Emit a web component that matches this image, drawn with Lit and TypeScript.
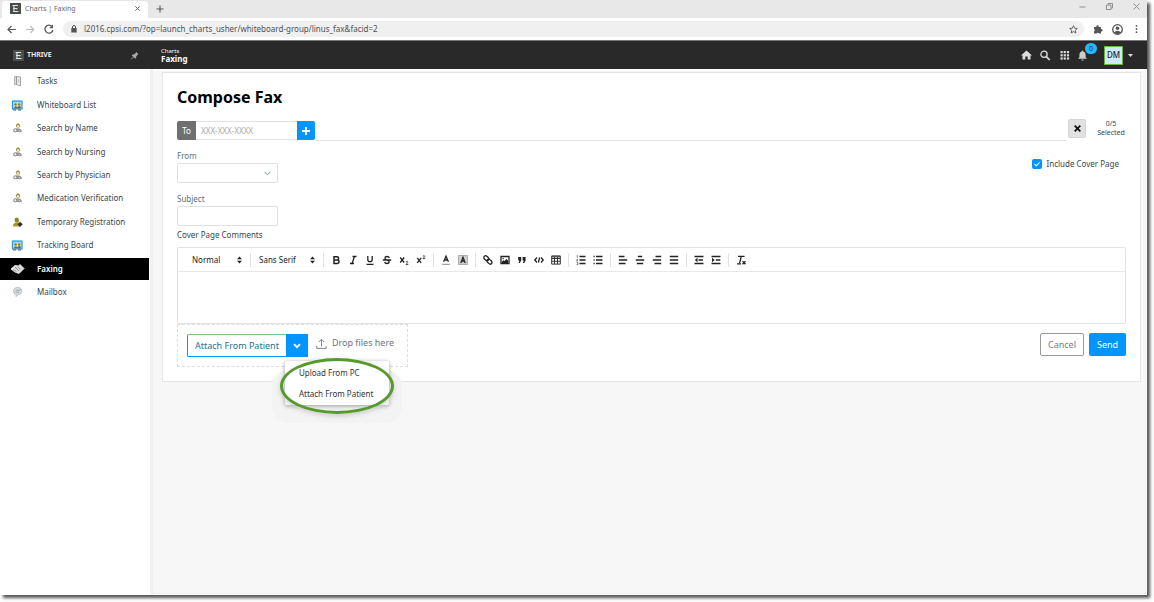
import { LitElement, html, svg, css } from "lit";
import { customElement, state } from "lit/decorators.js";

const NAV = [
  ["tasks", "Tasks"], ["board", "Whiteboard List"], ["search", "Search by Name"],
  ["search", "Search by Nursing"], ["search", "Search by Physician"],
  ["search", "Medication Verification"], ["person", "Temporary Registration"],
  ["board", "Tracking Board"], ["fax", "Faxing"], ["mail", "Mailbox"],
];

const NAV_ICONS: Record<string, unknown> = {
  tasks: svg`<path d="M2.500 1.500h2v8h-2z" fill="#ddd" stroke="#999" stroke-width=".7"/><path d="M4.500 1.500l4 .7v8.500l-4-1z" fill="#f0f0f0" stroke="#888" stroke-width=".8"/><path d="M6.500 4v4" stroke="#aaa" stroke-width=".7"/>`,
  board: svg`<path d="M.5 2h9.500v8H.5z" fill="#cfe3d0" stroke="#2196e8" stroke-width="1.200"/><path d="M.5 2.500h9.500" stroke="#45b1f5" stroke-width="1.500"/><circle cx="3.500" cy="5.500" r="1.300" fill="#8a8020"/><circle cx="7.200" cy="5.500" r="1.300" fill="#8a8020"/><path d="M1.500 9.500q2-4 4-1q2-4 4 1z" fill="#5d6a70"/><path d="M1 11h3M6 11h3" stroke="#333" stroke-width=".8"/>`,
  search: svg`<path d="M4 4q0-2.700 2-2.700T8 4L7.300 5.500H4.800z" fill="#9a8b2d"/><circle cx="6" cy="4.200" r="1.100" fill="#eee9cc"/><path d="M1.500 10q.5-3.700 4-3.700 4 0 4.500 3.700z" fill="#9a9e9f"/><circle cx="3.300" cy="8.300" r="1.600" fill="#e4eaec" stroke="#777" stroke-width=".8"/><circle cx="7.300" cy="8.800" r="1.100" fill="#e4eaec" stroke="#777" stroke-width=".7"/>`,
  person: svg`<path d="M2.500 4q0-2.500 2.200-2.500T7 4L6.500 6.500h-3z" fill="#91851f"/><path d="M1 10.500q0-4 3.700-4t4 4z" fill="#a19726"/><path d="M8 5.800L10.800 8.300 8 11 5.500 8.300z" fill="#333"/>`,
  fax: svg`<path d="M-1 6l4-3.500 3.500.5 1.500-1.500L12 5.500l-5 5-4-1.500z" fill="#dcdcdc" stroke="#fff" stroke-width=".8"/><path d="M3 4l4 4M5.500 3.500l3 3M1.500 6.500l3 2.300" stroke="#888" stroke-width=".9"/>`,
  mail: svg`<path d="M1.500 5q0-3.500 4.200-3.500T9.800 5 6 8.800l-2 2V8.500Q1.500 8 1.500 5z" fill="#d5dcdd" stroke="#a9b3b6" stroke-width=".7"/><path d="M3.500 6l1.500-2 2 1 1.500-2M4.500 7l2.500-.8" stroke="#8ba79a" stroke-width=".8" fill="none"/>`,
};

const S = (d: string) => svg`<path d=${d} fill="none" stroke="#222" stroke-width="1.300"/>`;
const F = (d: string) => svg`<path d=${d} fill="#222"/>`;

const TOOLS: [string, unknown][][] = [
  [
    ["Bold", svg`<path d="M3 1.700h3a1.600 1.600 0 0 1 0 3.300H3zM3 5h3.400a1.700 1.700 0 0 1 0 3.400H3z" fill="none" stroke="#222" stroke-width="1.500"/>`],
    ["Italic", S("M4.500 1.500h4M2 8.500h4M6.400 1.500L4.100 8.500")],
    ["Underline", S("M2.800 1v3.500a2.200 2.200 0 0 0 4.400 0V1M1.500 9.300h7")],
    ["Strike", S("M7.300 3Q7 1.500 5 1.500T2.900 3.200Q3 4.500 5 5T7.200 6.900Q7 8.500 5 8.500T2.700 7M.8 5h8.400")],
    ["Subscript", svg`${S("M1.200 2.500l4 5M5.200 2.500l-4 5")}<path d="M6.800 7q2-1.200 2 .3L7 9.500h2.300" fill="none" stroke="#222" stroke-width=".8"/>`],
    ["Superscript", svg`${S("M1.200 2.800l4 5M5.200 2.800l-4 5")}<path d="M6.800 1.200q2-1.200 2 .3L7 3.600h2.300" fill="none" stroke="#222" stroke-width=".8"/>`],
  ],
  [
    ["Text colour", svg`${S("M2.600 6.800L5 1.200l2.400 5.600M3.500 5h3")}<path d="M1.200 9.300h7.600" stroke="#888"/>`],
    ["Highlight", svg`<path d="M.5.500h9v9h-9z" fill="#d0d0d0" stroke="#777" stroke-dasharray="1 1"/>${S("M2.800 8L5 2.300 7.200 8M3.600 6h2.800")}`],
  ],
  [
    ["Link", svg`<g transform="rotate(42 5 5)" fill="none" stroke="#222" stroke-width="1.300"><rect x="-.2" y="3" width="5.600" height="3.600" rx="1.800"/><rect x="4.400" y="3.400" width="5.600" height="3.600" rx="1.800"/></g>`],
    ["Image", svg`${S("M1 1.500h8v7H1z")}${F("M2 8V6.500l1.500-1.300 1 .8L6.500 4 8 5.500V8zM2.500 3h1.200v1.200H2.500z")}`],
    ["Quote", F("M1.200 2h3v3.500L2.800 8H1.500l.9-2.500H1.200zM5.600 2h3v3.500L7.200 8H5.900l.9-2.500H5.600z")],
    ["Code", S("M3 2.500L.8 5 3 7.500M7 2.500L9.200 5 7 7.500M5.600 2.500L4.400 7.500")],
    ["Table", svg`<path d="M.7.900h8.600v8.200H.7zM.7 3.500h8.600M.7 6.300h8.600M3.500 2v7M6.500 2v7M.7 1.800h8.600" fill="none" stroke="#333"/>`],
  ],
  [
    ["Ordered list", svg`${S("M3.500 1.500h6M3.500 5h6M3.500 8.500h6")}<path d="M1.300.2v2.600M.6 4.300h1.200L.6 6h1.300M.6 7.500h1.300v2H.6" fill="none" stroke="#444" stroke-width=".7"/>`],
    ["Bullet list", S("M3 1.500h6.500M3 5h6.500M3 8.500h6.500M.5 1.500h1.200M.5 5h1.200M.5 8.500h1.200")],
  ],
  [
    ["Align left", S("M.8 1.500h5.700M.8 5h8.400M.8 8.500h6.700")],
    ["Align centre", S("M2.800 1.500h4.400M.8 5h8.400M1.800 8.500h6.400")],
    ["Align right", S("M3.500 1.500h5.700M.8 5h8.400M2.500 8.500h6.700")],
    ["Justify", S("M.8 1.500h8.400M.8 5h8.400M.8 8.500h8.400")],
  ],
  [
    ["Outdent", svg`${S("M.5 1.500h9M4.500 5h4.500M.5 8.500h9")}${F("M3.500 2.800v4.400L.8 5z")}`],
    ["Indent", svg`${S("M.5 1.500h9M4.800 5H9.300M.5 8.500h9")}${F("M1 2.800v4.400L3.700 5z")}`],
  ],
  [["Clear formatting", svg`${S("M2 1.300h6.500M5.300 1.300L3.600 8M1 8.800h4")}${S("M6.500 6.300l3 3M9.500 6.300l-3 3")}`]],
];

@customElement("app-root")
export class AppRoot extends LitElement {
  @state() private active = "Faxing";

  static styles = css`
    :host { display: block; font: 8px/12px "Noto Sans", "Open Sans", sans-serif; color: #38454b; background: #fff; }
    * { box-sizing: border-box; }
    button, input, select, textarea { font: inherit; color: inherit; margin: 0; padding: 0; border: 0; background: none; border-radius: 0; outline: 0; }
    button { display: inline-flex; align-items: center; justify-content: center; }
    svg { display: block; flex: none; overflow: visible; }
    a { color: inherit; text-decoration: none; }
    h1, ul { margin: 0; padding: 0; list-style: none; }
    .page { min-height: 100vh; padding: 0 7px 7px 0; display: flex; }
    .window { flex: 1; min-width: 0; display: flex; flex-direction: column; background: #fff; box-shadow: 3px 3px 3px #555; }

    .tabs { height: 18px; background: #e8e8e8; display: flex; align-items: center; padding: 0 7px 0 2px; }
    .tab { width: 146px; height: 17px; align-self: flex-end; background: #fff; border-radius: 4px 4px 0 0; display: flex; align-items: center; gap: 4px; padding: 0 8px 2px 8px; color: #656a6d; font-size: 7px; }
    .grow { flex: 1; }
    .new { padding: 0 8px; height: 16px; }
    .controls { display: flex; gap: 20px; align-self: flex-start; padding-top: 3px; }
    .bar { height: 22px; display: flex; align-items: center; gap: 9px; padding: 0 6px 0 7px; }
    .url { flex: 1; height: 16px; border-radius: 8px; background: #f0f0f0; display: flex; align-items: center; gap: 7px; padding: 0 6px 0 8px; }
    .url input { flex: 1; min-width: 0; color: #4c5155; }

    .app { height: 29px; border-top: 1px solid #777; background: #292929; color: #fff; display: flex; align-items: center; }
    .brand { width: 150px; padding: 0 11px 0 13px; display: flex; align-items: center; gap: 3px; flex: none; font-size: 7px; font-weight: 600; }
    .crumb { padding-left: 11px; flex: 1; font-size: 6px; line-height: 7px; }
    .crumb strong { display: block; font-size: 8px; line-height: 8px; }
    .actions { display: flex; align-items: center; gap: 8px; padding-right: 14px; }
    .bell { position: relative; }
    .badge { position: absolute; left: 7px; top: -7px; width: 12px; height: 11px; border-radius: 6px; background: #29b6f6; color: #134; font-size: 7px; line-height: 11px; text-align: center; }
    .user { width: 19px; height: 19px; background: #cdeaf8; border: 1px solid #6bb23a; color: #222; font-weight: 500; margin-left: 9px; }
    .actions .caret { margin-left: -3px; }

    .body { flex: 1; display: flex; }
    .side { width: 153px; flex: none; border-right: 3px solid #f0f0f0; padding-right: 1px; }
    .nav { display: grid; grid-auto-rows: 1fr; align-items: end; height: 234px; }
    .link { display: flex; align-items: center; height: 22px; padding-left: 12px; gap: 14px; color: #37464c; }
    .link.on { background: #000; color: #fff; font-weight: 600; }
    .main { flex: 1; min-width: 0; background: #f7f7f7; border: 1px solid #eee; border-width: 0 1px 1px 0; margin: 2px 1px 1px 0; padding: 1px 4px 0 9px; }
    .card { background: #fff; border: 1px solid #e5e5e5; padding: 14px; display: flex; flex-direction: column; }
    h1 { font-size: 16px; line-height: 20px; color: #000; font-weight: 700; }

    .to { display: flex; align-items: flex-start; margin-top: 12px; height: 22px; }
    .addr { display: flex; height: 19px; margin-top: 2px; }
    .addr label { width: 19px; background: #707070; color: #fff; border-radius: 2px 0 0 2px; line-height: 19px; text-align: center; }
    .addr input { width: 101px; border: 1px solid #e2e2e2; border-width: 1px 0; padding-left: 5px; }
    .addr input::placeholder { color: #a9a9a9; opacity: 1; }
    .add { width: 18px; background: #0095ff; border-radius: 0 2px 2px 0; }
    .rule { flex: 1; align-self: flex-end; margin: 0 2px 0 1px; border-bottom: 1px solid #e2e2e2; }
    .clear { width: 18px; height: 19px; background: #e1e1e1; border: 1px solid #d5d5d5; border-radius: 2px; }
    .count { width: 30px; margin-left: 10px; text-align: center; font-size: 7px; line-height: 9px; }

    .row { display: flex; justify-content: space-between; align-items: flex-start; }
    .field { display: flex; flex-direction: column; width: 101px; color: #5d7079; }
    .from { margin-top: 9px; } .subject { margin-top: 10px; }
    .field input, .pick { height: 20px; border: 1px solid #e0e0e0; border-radius: 2px; margin-top: 1px; }
    .stack { display: grid; align-items: center; }
    .stack > * { grid-area: 1 / 1; }
    .stack svg { justify-self: end; pointer-events: none; }
    select { appearance: none; width: 100%; height: 100%; }
    .pick svg { margin-right: 6px; }
    .check { display: flex; align-items: center; gap: 5px; margin: 17px 7px 0 0; }
    .box { width: 10px; height: 10px; }
    .box input { appearance: none; width: 10px; height: 10px; background: #0095ff; border-radius: 2px; }
    .comments { margin-top: 3px; color: #38454b; }

    .editor { border: 1px solid #e2e2e2; border-radius: 2px; margin-top: 6px; }
    .tools { display: flex; align-items: center; height: 24px; border-bottom: 1px solid #e8e8e8; padding-left: 14px; }
    .sel { width: 50px; height: 14px; color: #222; }
    .sel.wide { width: 56px; }
    .group { display: flex; align-items: center; height: 14px; }
    .group + .group { border-left: 1px solid #e2e2e2; }
    .group.menu { padding-right: 8px; }
    .group.menu + .group.menu { padding: 0 8px; }
    .group.set { padding: 0 4px 0 3px; }
    .tool { width: 17px; height: 14px; }
    textarea { display: block; width: 100%; height: 51px; resize: none; }

    .foot { display: flex; justify-content: space-between; align-items: flex-start; }
    .drop { display: flex; align-items: flex-start; padding: 9px 13px 9px 9px; border: 1px dashed #dedede; color: #687a83; font-size: 9px; }
    .split { display: flex; position: relative; height: 23px; margin-right: 8px; }
    .attach { border: 1px solid #0095ff; border-top-color: #7fbd82; border-right: 0; padding: 0 7px; color: #1e7193; border-radius: 2px 0 0 2px; white-space: nowrap; }
    .more { width: 22px; background: #0095ff; }
    .hint { display: flex; gap: 5px; align-items: center; padding-top: 3px; white-space: nowrap; }
    .menu-pop { position: absolute; right: -81px; top: 27px; width: 104px; background: #fff; border-radius: 2px; box-shadow: 0 1px 4px #9c9c9c; padding: 1px 0; }
    .menu-pop a { display: block; height: 21px; line-height: 21px; padding-left: 14px; color: #333; font-size: 8px; }
    .ring { position: absolute; right: -86px; top: 24px; width: 114px; height: 56px; border: 3px solid #56992d; border-radius: 50%; pointer-events: none; box-shadow: 0 2px 5px #ccc; }
    .halo { position: absolute; right: -94px; top: 36px; width: 130px; height: 53px; border-radius: 16px; background: #f3f3f3; }
    .btns { display: flex; gap: 5px; margin-top: 9px; font-size: 9px; }
    .btns button { height: 23px; border-radius: 2px; }
    .cancel { width: 44px; border: 1px solid #999; color: #6f7f88; }
    .send { width: 37px; background: #0095ff; color: #fff; }
  `;

  private svg(w: number, h: number, body: unknown, cls = "") {
    return html`<svg class=${cls} width=${w} height=${h} viewBox="0 0 ${w} ${h}" aria-hidden="true">${body}</svg>`;
  }

  private logo() {
    return this.svg(11, 11, svg`<path d="M0 0h11v11H0z" fill="#4c4c4c"/><path d="M2.500 2.500h5.500M3 5.500h4.500M3 8.500h5.500M4 2.500v6" stroke="#d7e9ef" fill="none" stroke-width="1.100"/><path d="M6 7l2.500-2.500" stroke="#76a65a" stroke-width=".8"/>`);
  }

  private arrows() {
    return this.svg(5, 8, svg`<path d="M0 3.200L2.500.5 5 3.200zM0 4.800h5L2.500 7.500z" fill="#222"/>`);
  }

  render() {
    return html`<div class="page"><div class="window">
      <div class="tabs">
        <div class="tab">${this.logo()}<span class="grow">Charts | Faxing</span>
          <button aria-label="Close tab">${this.svg(5, 5, svg`<path d="M.3.300l4.400 4.400M4.700.300L.3 4.700" stroke="#555" stroke-width=".9"/>`)}</button></div>
        <button class="new" aria-label="New tab">${this.svg(8, 8, svg`<path d="M4 .5v7M.5 4h7" stroke="#555" stroke-width="1.100"/>`)}</button>
        <span class="grow"></span>
        <div class="controls">
          <button aria-label="Minimize">${this.svg(7, 7, svg`<path d="M.5 4h6" stroke="#888" stroke-width=".9"/>`)}</button>
          <button aria-label="Restore">${this.svg(7, 7, svg`<path d="M.5 2h4.500v4.500H.5zM2 2V.5h4.500V5H5" fill="none" stroke="#888" stroke-width=".9"/>`)}</button>
          <button aria-label="Close">${this.svg(7, 7, svg`<path d="M.5.500l6 6M6.500.500l-6 6" stroke="#888" stroke-width=".9"/>`)}</button>
        </div>
      </div>
      <div class="bar">
        <button aria-label="Back">${this.svg(9, 9, svg`<path d="M8.800 4.500H1M4.500 1L1 4.500 4.500 8" fill="none" stroke="#555" stroke-width="1.200"/>`)}</button>
        <button aria-label="Forward">${this.svg(10, 9, svg`<path d="M1 4.500h7.800M5.300 1l3.500 3.500L5.300 8" fill="none" stroke="#bbb" stroke-width="1.100"/>`)}</button>
        <button aria-label="Reload">${this.svg(10, 10, svg`<path d="M8 2.500A4 4 0 1 0 8.900 6" fill="none" stroke="#555" stroke-width="1.300"/><path d="M9 .5v3.800H5.200z" fill="#555"/>`)}</button>
        <div class="url">
          ${this.svg(6, 8, svg`<path d="M.3 3h5.400v4.500H.3z" fill="#555"/><path d="M1.500 3V2a1.500 1.500 0 0 1 3 0v1" fill="none" stroke="#555"/>`)}
          <input aria-label="Address" value="l2016.cpsi.com/?op=launch_charts_usher/whiteboard-group/linus_fax&amp;facid=2">
          ${this.svg(9, 9, svg`<path d="M4.500.7l1.100 2.500 2.700.3-2 1.800.6 2.700-2.400-1.400L2.100 8l.6-2.700-2-1.800 2.700-.3z" fill="none" stroke="#555" stroke-width=".9"/>`)}
        </div>
        ${this.svg(10, 10, svg`<path d="M1 3h2.300a1.300 1.300 0 1 1 2.500 0H8v2.200a1.200 1.200 0 1 1 0 2.300V9.500H6a1.200 1.200 0 0 0-2.300 0H1V7.300a1.200 1.200 0 0 0 0-2.300z" fill="#555"/>`)}
        ${this.svg(11, 11, svg`<circle cx="5.500" cy="5.500" r="4.800" fill="none" stroke="#555" stroke-width="1.300"/><circle cx="5.500" cy="4.200" r="1.800" fill="#555"/><path d="M1.800 8.300q3.700-3.200 7.400 0-3.700 4-7.400 0z" fill="#555"/>`)}
        <button aria-label="Browser menu">${this.svg(9, 10, svg`<g fill="#555"><circle cx="4.500" cy="1.800" r=".9"/><circle cx="4.500" cy="5" r=".9"/><circle cx="4.500" cy="8.200" r=".9"/></g>`)}</button>
      </div>
      <header class="app">
        <div class="brand">${this.logo()}<span class="grow">THRIVE</span>
          <button aria-label="Pin menu">${this.svg(8, 9, svg`<path d="M5 .8l2.500 2.500-.8.300-1.500 1.800L5 7.200l-.9.400L.9 4.400l.5-.8 1.700-.1L4.800 2z" fill="#aaa"/><path d="M2.800 5.600L.4 8.200" stroke="#aaa" stroke-width=".9"/>`)}</button></div>
        <div class="crumb">Charts<strong>Faxing</strong></div>
        <div class="actions">
          <button aria-label="Home">${this.svg(11, 10, svg`<path d="M5.500.5L11 5.500H9.500v4H6.700V6.500H4.300v3H1.500v-4H0z" fill="#ddd"/>`)}</button>
          <button aria-label="Search">${this.svg(11, 11, svg`<circle cx="4" cy="4.300" r="3.100" fill="none" stroke="#ddd" stroke-width="1.300"/><path d="M6.300 6.600L9.700 10" stroke="#ddd" stroke-width="1.700"/>`)}</button>
          <button aria-label="Apps">${this.svg(11, 10, svg`${[1, 4.2, 7.4].map((y) => [1.5, 4.7, 7.9].map((x) => svg`<rect x=${x} y=${y} width="2.200" height="2.200" fill="#ddd"/>`))}`)}</button>
          <button class="bell" aria-label="Notifications">${this.svg(9, 11, svg`<path d="M4.500.5q.8 0 .8.900 2.300.6 2.300 3.100v2.700L9 8.800H0l1.400-1.600V4.500q0-2.500 2.300-3.100 0-.9.800-.9zM3.300 9.400h2.400q-.1 1.200-1.200 1.200t-1.200-1.200z" fill="#ccc"/>`)}<span class="badge">0</span></button>
          <button class="user">DM</button>
          ${this.svg(5, 3, svg`<path d="M0 0h5L2.500 3z" fill="#ddd"/>`, "caret")}
        </div>
      </header>
      <div class="body">
        <nav class="side"><ul class="nav">${NAV.map(([icon, name]) => html`<li>
          <a href="#" class="link ${name === this.active ? "on" : ""}" @click=${(e: Event) => { e.preventDefault(); this.active = name; }}>${this.svg(11, 12, NAV_ICONS[icon])}${name}</a></li>`)}</ul></nav>
        <main class="main"><section class="card">
          <h1>Compose Fax</h1>
          <div class="to">
            <div class="addr"><label for="to">To</label><input id="to" placeholder="XXX-XXX-XXXX">
              <button class="add" aria-label="Add number">${this.svg(8, 8, svg`<path d="M4 0v8M0 4h8" stroke="#fff" stroke-width="1.800"/>`)}</button></div>
            <span class="rule"></span>
            <button class="clear" aria-label="Clear numbers">${this.svg(7, 7, svg`<path d="M.7.700l5.600 5.600M6.300.700L.7 6.300" stroke="#111" stroke-width="1.800"/>`)}</button>
            <div class="count">0/5<br>Selected</div>
          </div>
          <div class="row">
            <div class="field from"><label for="from">From</label>
              <div class="pick stack"><select id="from"><option></option></select>${this.svg(7, 5, svg`<path d="M.5.800L3.500 3.800 6.500.800" fill="none" stroke="#78909c"/>`)}</div></div>
            <label class="check"><span class="box stack"><input type="checkbox" checked>${this.svg(10, 10, svg`<path d="M2.500 5l1.800 1.800L7.700 3.300" fill="none" stroke="#fff" stroke-width="1.100"/>`)}</span>Include Cover Page</label>
          </div>
          <div class="field subject"><label for="subject">Subject</label><input id="subject"></div>
          <label class="comments" for="comments">Cover Page Comments</label>
          <div class="editor">
            <div class="tools">
              <div class="group menu"><div class="sel stack"><select aria-label="Text style"><option>Normal</option></select>${this.arrows()}</div></div>
              <div class="group menu"><div class="sel wide stack"><select aria-label="Font"><option>Sans Serif</option></select>${this.arrows()}</div></div>
              ${TOOLS.map((g) => html`<div class="group set">${g.map(([name, icon]) => html`<button class="tool" aria-label=${name}>${this.svg(10, 10, icon)}</button>`)}</div>`)}
            </div>
            <textarea id="comments"></textarea>
          </div>
          <div class="foot">
            <div class="drop">
              <div class="split"><span class="halo"></span>
                <button class="attach">Attach From Patient</button>
                <button class="more" aria-label="Attachment options">${this.svg(8, 6, svg`<path d="M1 1.200l3 3 3-3" fill="none" stroke="#fff" stroke-width="1.900"/>`)}</button>
                <div class="menu-pop"><a href="#">Upload From PC</a><a href="#">Attach From Patient</a></div><span class="ring"></span>
              </div>
              <div class="hint">${this.svg(11, 11, svg`<path d="M5.500 8.500V1.500M2.800 4l2.700-2.700L8.200 4M.8 8v2.400h9.400V8" fill="none" stroke="#6c7a82" stroke-width=".9"/>`)}<span>Drop files here</span></div>
            </div>
            <div class="btns"><button class="cancel">Cancel</button><button class="send">Send</button></div>
          </div>
        </section></main>
      </div>
    </div></div>`;
  }
}
